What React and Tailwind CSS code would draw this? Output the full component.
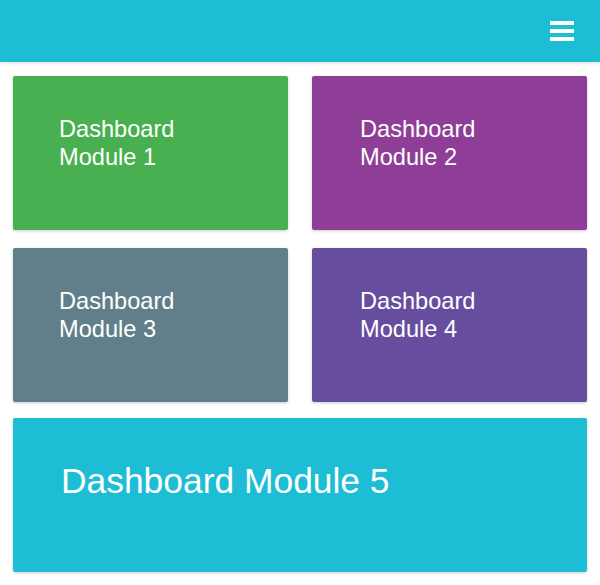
import React from "react";

function Card({ color, pad, children }) {
  return (
    <div
      className={`h-[154px] rounded-[2px] pt-[39px] text-white text-[23.6px] leading-[28px] shadow-[0_1px_3px_rgba(0,0,0,0.2)] ${pad} ${color}`}
    >
      {children}
    </div>
  );
}

export default function App() {
  return (
    <div
      className="w-[600px] h-[585px] bg-white overflow-hidden"
      style={{ fontFamily: '"Liberation Sans", Arial, sans-serif' }}
    >
      <header className="h-[62px] bg-[#1dbdd6] flex items-center justify-end pr-[26px] shadow-[0_1px_3px_rgba(0,0,0,0.15)] relative z-10">
        <div className="flex flex-col gap-[4px] w-[24px]">
          <span className="block h-[4px] bg-white" />
          <span className="block h-[4px] bg-white" />
          <span className="block h-[4px] bg-white" />
        </div>
      </header>
      <main className="px-[13px] pt-[14px]">
        <div className="grid grid-cols-2 gap-x-[24px] gap-y-[18px]">
          <Card color="bg-[#48b050]" pad="pl-[46px]">
            Dashboard
            <br />
            Module 1
          </Card>
          <Card color="bg-[#8e3e96]" pad="pl-[48px]">
            Dashboard
            <br />
            Module 2
          </Card>
          <Card color="bg-[#617f8a]" pad="pl-[46px]">
            Dashboard
            <br />
            Module 3
          </Card>
          <Card color="bg-[#674d9e]" pad="pl-[48px]">
            Dashboard
            <br />
            Module 4
          </Card>
        </div>
        <div className="mt-[16px] h-[154px] rounded-[2px] bg-[#1dbdd6] pl-[48px] pt-[43px] text-white text-[35.4px] leading-[40px] shadow-[0_1px_3px_rgba(0,0,0,0.2)]">
          Dashboard Module 5
        </div>
      </main>
    </div>
  );
}
